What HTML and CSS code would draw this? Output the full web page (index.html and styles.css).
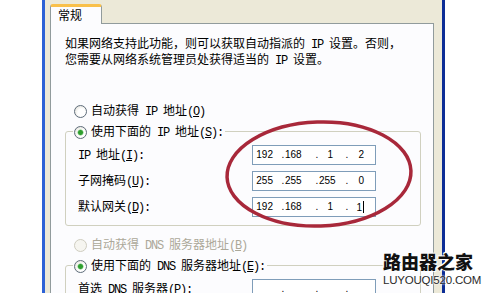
FILE: index.html
```html
<!DOCTYPE html>
<html lang="zh-CN">
<head>
<meta charset="utf-8">
<title>Internet 协议 (TCP/IP) 属性</title>
<link rel="stylesheet" href="styles.css">
</head>
<body>
<div class="page">
  <div class="gutter"></div>
  <div class="window">
    <div class="tabs"><div class="tab">常规</div></div>
    <div class="panel">
      <p class="desc">如果网络支持此功能，则可以获取自动指派的<span class="l"> IP </span>设置。否则，<br>您需要从网络系统管理员处获得适当的<span class="l"> IP </span>设置。</p>
      <div class="opt first"><span class="radio"></span><span>自动获得<span class="l"> IP </span>地址<span class="l">(<u>O</u>)</span></span></div>
      <div class="group">
        <div class="opt legend"><span class="radio on"></span><span>使用下面的<span class="l"> IP </span>地址<span class="l">(<u>S</u>):</span></span></div>
        <div class="fields">
          <span class="lbl"><span class="l">IP </span>地址<span class="l">(<u>I</u>):</span></span>
          <div class="ip"><span class="n1">192</span><span class="d">.</span><span class="n2">168</span><span class="d">.</span><span class="n3">1</span><span class="d">.</span><span class="n4">2</span></div>
          <span class="lbl">子网掩码<span class="l">(<u>U</u>):</span></span>
          <div class="ip"><span class="n1">255</span><span class="d">.</span><span class="n2">255</span><span class="d">.</span><span class="n3">255</span><span class="d">.</span><span class="n4">0</span></div>
          <span class="lbl">默认网关<span class="l">(<u>D</u>):</span></span>
          <div class="ip"><span class="n1">192</span><span class="d">.</span><span class="n2">168</span><span class="d">.</span><span class="n3">1</span><span class="d">.</span><span class="n4">1<i class="caret"></i></span></div>
        </div>
      </div>
      <div class="opt dis"><span class="radio off"></span><span>自动获得<span class="l"> DNS </span>服务器地址<span class="l">(<u>B</u>)</span></span></div>
      <div class="group dns">
        <div class="opt legend"><span class="radio on"></span><span>使用下面的<span class="l"> DNS </span>服务器地址<span class="l">(<u>E</u>):</span></span></div>
        <div class="fields">
          <span class="lbl">首选<span class="l"> DNS </span>服务器<span class="l">(<u>P</u>):</span></span>
          <div class="ip"><span class="n1"></span><span class="d">.</span><span class="n2"></span><span class="d">.</span><span class="n3"></span><span class="d">.</span><span class="n4"></span></div>
          <span class="lbl">备用<span class="l"> DNS </span>服务器<span class="l">(<u>A</u>):</span></span>
          <div class="ip"><span class="n1"></span><span class="d">.</span><span class="n2"></span><span class="d">.</span><span class="n3"></span><span class="d">.</span><span class="n4"></span></div>
        </div>
      </div>
    </div>
  </div>
  <svg class="mark" width="484" height="293" viewBox="0 0 484 293" aria-hidden="true">
    <ellipse cx="319" cy="174" rx="92" ry="52" transform="rotate(-2 319 174)" fill="none" stroke="#a8283a" stroke-width="3.5"/>
  </svg>
  <div class="wm">
    <div class="wm-cn">路由器之家</div>
    <div class="wm-en">LUYOUQI520.COM</div>
  </div>
</div>
</body>
</html>
```
FILE: styles.css
```css
* { box-sizing: border-box; }
html, body { margin: 0; padding: 0; background: #fff; }
body {
  font-family: "Noto Sans CJK SC", sans-serif;
  font-size: 12px;
  color: #000;
}
.page {
  position: relative;
  display: flex;
  width: 484px;
  height: 293px;
  overflow: hidden;
}
.gutter { width: 42px; flex: none; }
.window {
  width: 403px;
  flex: none;
  display: flex;
  flex-direction: column;
  background: #ece9d8;
  border-left: 3px solid #2d62d6;
  border-right: 3px solid #0c2d96;
  padding: 4px 8px 0 5px;
}
.tabs { height: 19px; display: flex; flex: none; }
.tab {
  position: relative;
  z-index: 1;
  width: 52px;
  height: 20px;
  background: #fcfcfe;
  border: 1px solid #919b9c;
  border-top: 3px solid #f9c04a;
  border-bottom: none;
  border-radius: 3px 3px 0 0;
  padding-left: 7px;
  line-height: 15px;
}
.panel {
  flex: 1;
  background: #fcfcfe;
  border: 1px solid #919b9c;
  border-bottom: none;
  padding: 12px 0 0 14px;
}
.desc { margin: 0; line-height: 13px; white-space: nowrap; }
.l {
  font-family: "Liberation Mono", monospace;
  font-size: 12px;
  letter-spacing: -1.2px;
}
u { text-decoration: underline; text-underline-offset: 1px; }
.opt {
  display: flex;
  align-items: center;
  height: 20px;
  margin-left: 9px;
  line-height: 20px;
  white-space: nowrap;
}
.opt.first { margin-top: 33px; }
.opt > .radio { margin-right: 4px; }
.radio {
  flex: none;
  width: 13px;
  height: 13px;
  border-radius: 50%;
  border: 1px solid #5e6c7a;
  background: radial-gradient(circle at 60% 60%, #ffffff 0 40%, #d8d6cc 100%);
}
.radio.on {
  background:
    radial-gradient(circle, #2f9e2f 0 2px, #7cc87c 2.6px, rgba(160,220,160,0) 3.4px),
    radial-gradient(circle at 60% 60%, #ffffff 0 40%, #d8d6cc 100%);
}
.radio.off {
  border-color: #cfcdc0;
  background: #f6f5f0;
}
.group {
  margin-top: 10px;
  width: 356px;
  border: 1px solid #d0d0bf;
  border-radius: 3px;
  padding: 0 0 8px 0;
}
.group.dns { padding-bottom: 30px; }
.legend {
  margin: -10px 0 0 7px;
  width: fit-content;
  padding: 0 2px 0 1px;
  background: #fcfcfe;
}
.fields {
  display: grid;
  grid-template-columns: 174px 124px;
  grid-auto-rows: 20px;
  row-gap: 6px;
  align-items: center;
  margin-top: 3px;
  padding-left: 12px;
}
.dns .fields { margin-top: 3px; }
.lbl { white-space: nowrap; line-height: 20px; }
.opt.dis { margin-top: 9px; color: #aca899; }
.ip {
  height: 20px;
  border: 1px solid #7f9db9;
  background: #fff;
  display: flex;
  align-items: center;
  font-family: "Liberation Sans", sans-serif;
  font-size: 10px;
  line-height: 12px;
  color: #000;
}
.ip span { flex: none; text-align: right; white-space: nowrap; }
.ip .n1 { width: 28px; padding-right: 8px; }
.ip .d { width: 4px; text-align: center; }
.ip .n2 { width: 30px; padding-right: 15px; }
.ip .n3 { width: 26px; padding-right: 12px; }
.ip .n4 { width: 15px; text-align: right; }
.caret {
  display: inline-block;
  width: 1px;
  height: 12px;
  margin-left: 1px;
  background: #000;
  vertical-align: -2px;
}
.mark {
  position: absolute;
  left: 0;
  top: 0;
  pointer-events: none;
}
.wm {
  position: absolute;
  left: 383px;
  top: 251px;
  width: 100px;
}
.wm-cn {
  font-family: "Noto Sans CJK SC", sans-serif;
  font-size: 18px;
  font-weight: 900;
  line-height: 20px;
  color: #111;
  white-space: nowrap;
  text-shadow: 0 0 2px #fff, 0 0 2px #fff, 1px 1px 0 #fff, -1px -1px 0 #fff;
}
.wm-en {
  margin-top: 3px;
  font-family: "Liberation Sans", sans-serif;
  font-size: 11.5px;
  letter-spacing: -0.2px;
  line-height: 12px;
  color: #2a2a2a;
  white-space: nowrap;
  text-shadow: 0 0 2px #fff, 0 0 2px #fff;
}
```
